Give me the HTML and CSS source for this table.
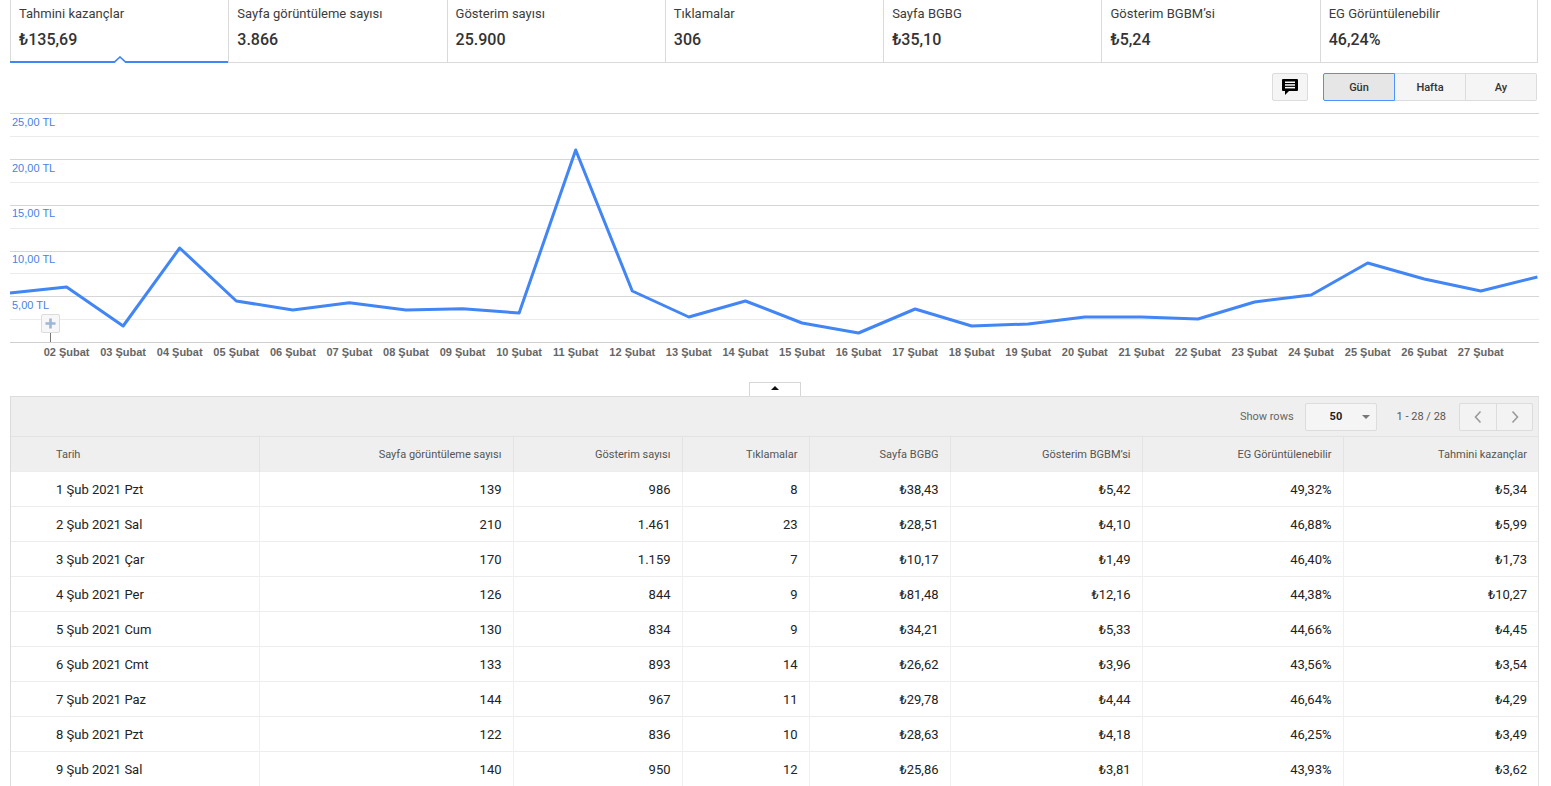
FILE: index.html
```html
<!DOCTYPE html>
<html lang="tr">
<head>
<meta charset="utf-8">
<title>Rapor</title>
<link rel="stylesheet" href="styles.css">
</head>
<body>
<div class="page">
  <div class="tabs">
    <div class="tab active">
      <div class="tab-title">Tahmini kazançlar</div>
      <div class="tab-value">₺135,69</div>
      <svg class="caret" width="14" height="7" viewBox="0 0 14 7"><polyline points="0.5,7 7,1 13.5,7" fill="#fff" stroke="#4285f4" stroke-width="1.6"/></svg>
    </div>
    <div class="tab"><div class="tab-title">Sayfa görüntüleme sayısı</div><div class="tab-value">3.866</div></div>
    <div class="tab"><div class="tab-title">Gösterim sayısı</div><div class="tab-value">25.900</div></div>
    <div class="tab"><div class="tab-title">Tıklamalar</div><div class="tab-value">306</div></div>
    <div class="tab"><div class="tab-title">Sayfa BGBG</div><div class="tab-value">₺35,10</div></div>
    <div class="tab"><div class="tab-title">Gösterim BGBM’si</div><div class="tab-value">₺5,24</div></div>
    <div class="tab"><div class="tab-title">EG Görüntülenebilir</div><div class="tab-value">46,24%</div></div>
  </div>

  <div class="toolbar">
    <button class="icon-btn" type="button">
      <svg width="16" height="16" viewBox="0 0 16 16"><rect x="0" y="0" width="16" height="12" rx="1" fill="#000"/><polygon points="3,11 3,16 8,11" fill="#000"/><rect x="3" y="2.5" width="10" height="1.5" fill="#fff"/><rect x="3" y="5.2" width="10" height="1.5" fill="#fff"/><rect x="3" y="7.9" width="10" height="1.5" fill="#fff"/></svg>
    </button>
    <div class="seg">
      <button class="seg-btn on" type="button">Gün</button>
      <button class="seg-btn" type="button">Hafta</button>
      <button class="seg-btn" type="button">Ay</button>
    </div>
  </div>

  <div class="chart">
    <svg class="chart-svg" width="1529" height="260" viewBox="0 0 1529 260">
      <g class="grid-minor" stroke="#ebebeb" stroke-width="1">
        <line x1="0" y1="31.5" x2="1529" y2="31.5"/>
        <line x1="0" y1="77.5" x2="1529" y2="77.5"/>
        <line x1="0" y1="123.5" x2="1529" y2="123.5"/>
        <line x1="0" y1="168.5" x2="1529" y2="168.5"/>
        <line x1="0" y1="214.5" x2="1529" y2="214.5"/>
      </g>
      <g class="grid-major" stroke="#d6d6d6" stroke-width="1">
        <line x1="0" y1="8.5" x2="1529" y2="8.5"/>
        <line x1="0" y1="54.5" x2="1529" y2="54.5"/>
        <line x1="0" y1="100.5" x2="1529" y2="100.5"/>
        <line x1="0" y1="146.5" x2="1529" y2="146.5"/>
        <line x1="0" y1="191.5" x2="1529" y2="191.5"/>
        <line x1="0" y1="237.5" x2="1529" y2="237.5" stroke="#cfcfcf"/>
      </g>
      <g class="ylab">
        <text x="2" y="21">25,00 TL</text>
        <text x="2" y="67">20,00 TL</text>
        <text x="2" y="112">15,00 TL</text>
        <text x="2" y="158">10,00 TL</text>
        <text x="2" y="204">5,00 TL</text>
      </g>
      <polyline fill="none" stroke="#4285f4" stroke-width="3" stroke-linejoin="round" points="0,188 56.57,182 113.14,221 169.71,143 226.28,196 282.85,205 339.42,197.7 395.99,205 452.56,203.8 509.13,208 565.7,45 622.27,186 678.84,212 735.41,196 791.98,218 848.55,228 905.12,204 961.69,221 1018.26,219 1074.83,212 1131.4,212 1187.97,214 1244.54,197 1301.11,190 1357.68,158 1414.25,174 1470.82,186 1527.39,172"/>
      <line x1="40.5" y1="226" x2="40.5" y2="237" stroke="#777" stroke-width="1"/>
      <rect x="31.5" y="209.5" width="18" height="18" rx="1.5" fill="#f7f7f7" stroke="#dcdcdc"/>
      <path d="M40.5 213.5v10M35.5 218.5h10" stroke="#9bb6d8" stroke-width="2.6"/>
      <g class="xlab">
        <text x="56.6" y="251">02 Şubat</text>
        <text x="113.1" y="251">03 Şubat</text>
        <text x="169.7" y="251">04 Şubat</text>
        <text x="226.3" y="251">05 Şubat</text>
        <text x="282.9" y="251">06 Şubat</text>
        <text x="339.4" y="251">07 Şubat</text>
        <text x="396" y="251">08 Şubat</text>
        <text x="452.6" y="251">09 Şubat</text>
        <text x="509.1" y="251">10 Şubat</text>
        <text x="565.7" y="251">11 Şubat</text>
        <text x="622.3" y="251">12 Şubat</text>
        <text x="678.8" y="251">13 Şubat</text>
        <text x="735.4" y="251">14 Şubat</text>
        <text x="792" y="251">15 Şubat</text>
        <text x="848.6" y="251">16 Şubat</text>
        <text x="905.1" y="251">17 Şubat</text>
        <text x="961.7" y="251">18 Şubat</text>
        <text x="1018.3" y="251">19 Şubat</text>
        <text x="1074.8" y="251">20 Şubat</text>
        <text x="1131.4" y="251">21 Şubat</text>
        <text x="1188" y="251">22 Şubat</text>
        <text x="1244.5" y="251">23 Şubat</text>
        <text x="1301.1" y="251">24 Şubat</text>
        <text x="1357.7" y="251">25 Şubat</text>
        <text x="1414.3" y="251">26 Şubat</text>
        <text x="1470.8" y="251">27 Şubat</text>
      </g>
    </svg>
  </div>

  <div class="collapse-row">
    <div class="collapse-tab"><span class="tri"></span></div>
  </div>

  <div class="panel">
    <div class="panel-bar">
      <span class="show-rows">Show rows</span>
      <div class="rows-select"><span class="rows-num">50</span><span class="dd"></span></div>
      <span class="range">1 - 28 / 28</span>
      <div class="pager">
        <button class="pg" type="button"><svg width="10" height="14" viewBox="0 0 10 14"><polyline points="7.5,1.5 2.5,7 7.5,12.5" fill="none" stroke="#9a9a9a" stroke-width="1.6"/></svg></button>
        <button class="pg" type="button"><svg width="10" height="14" viewBox="0 0 10 14"><polyline points="2.5,1.5 7.5,7 2.5,12.5" fill="none" stroke="#9a9a9a" stroke-width="1.6"/></svg></button>
      </div>
    </div>
    <table class="grid">
      <colgroup>
        <col class="w1"><col class="w2"><col class="w3"><col class="w4"><col class="w5"><col class="w6"><col class="w7"><col class="w8">
      </colgroup>
      <thead>
        <tr>
          <th class="left">Tarih</th>
          <th>Sayfa görüntüleme sayısı</th>
          <th>Gösterim sayısı</th>
          <th>Tıklamalar</th>
          <th>Sayfa BGBG</th>
          <th>Gösterim BGBM’si</th>
          <th>EG Görüntülenebilir</th>
          <th>Tahmini kazançlar</th>
        </tr>
      </thead>
      <tbody>
        <tr><td class="left">1 Şub 2021 Pzt</td><td>139</td><td>986</td><td>8</td><td>₺38,43</td><td>₺5,42</td><td>49,32%</td><td>₺5,34</td></tr>
        <tr><td class="left">2 Şub 2021 Sal</td><td>210</td><td>1.461</td><td>23</td><td>₺28,51</td><td>₺4,10</td><td>46,88%</td><td>₺5,99</td></tr>
        <tr><td class="left">3 Şub 2021 Çar</td><td>170</td><td>1.159</td><td>7</td><td>₺10,17</td><td>₺1,49</td><td>46,40%</td><td>₺1,73</td></tr>
        <tr><td class="left">4 Şub 2021 Per</td><td>126</td><td>844</td><td>9</td><td>₺81,48</td><td>₺12,16</td><td>44,38%</td><td>₺10,27</td></tr>
        <tr><td class="left">5 Şub 2021 Cum</td><td>130</td><td>834</td><td>9</td><td>₺34,21</td><td>₺5,33</td><td>44,66%</td><td>₺4,45</td></tr>
        <tr><td class="left">6 Şub 2021 Cmt</td><td>133</td><td>893</td><td>14</td><td>₺26,62</td><td>₺3,96</td><td>43,56%</td><td>₺3,54</td></tr>
        <tr><td class="left">7 Şub 2021 Paz</td><td>144</td><td>967</td><td>11</td><td>₺29,78</td><td>₺4,44</td><td>46,64%</td><td>₺4,29</td></tr>
        <tr><td class="left">8 Şub 2021 Pzt</td><td>122</td><td>836</td><td>10</td><td>₺28,63</td><td>₺4,18</td><td>46,25%</td><td>₺3,49</td></tr>
        <tr><td class="left">9 Şub 2021 Sal</td><td>140</td><td>950</td><td>12</td><td>₺25,86</td><td>₺3,81</td><td>43,93%</td><td>₺3,62</td></tr>
      </tbody>
    </table>
  </div>
</div>
</body>
</html>
```

FILE: styles.css
```css
html, body {
  margin: 0;
  padding: 0;
  background: #fff;
  overflow: hidden;
}
body {
  font-family: Roboto, "Liberation Sans", "DejaVu Sans", sans-serif;
  color: #333;
}
.page {
  margin-left: 10px;
  width: 1529px;
}

/* metric tabs */
.tabs {
  display: grid;
  grid-template-columns: repeat(7, 1fr);
  width: 1528px;
  height: 62px;
  border-bottom: 1px solid #dadada;
}
.tab {
  position: relative;
  border-left: 1px solid #dadada;
  padding: 6px 8px 0 8px;
}
.tab:last-child {
  border-right: 1px solid #dadada;
}
.tab-title {
  font-size: 13px;
  line-height: 16px;
  color: #3c3c3c;
  white-space: nowrap;
}
.tab-value {
  margin-top: 8px;
  font-size: 16px;
  line-height: 20px;
  font-weight: 500;
  color: #333;
}
.tab.active::after {
  content: "";
  position: absolute;
  left: -1px;
  right: 0;
  bottom: -1px;
  height: 2px;
  background: #4285f4;
}
.caret {
  position: absolute;
  left: 50%;
  bottom: -1px;
  margin-left: -7px;
  z-index: 2;
  display: block;
}

/* toolbar */
.toolbar {
  display: flex;
  justify-content: flex-end;
  align-items: center;
  gap: 15px;
  margin-top: 10px;
  padding-right: 2px;
  height: 28px;
}
.icon-btn {
  width: 36px;
  height: 28px;
  border: 1px solid #dcdcdc;
  border-radius: 2px;
  background: #f5f5f5;
  display: flex;
  align-items: center;
  justify-content: center;
  padding: 0;
  margin: 0;
}
.seg {
  display: flex;
  height: 28px;
}
.seg-btn {
  height: 28px;
  margin: 0;
  padding: 1px 0 0 0;
  border: 1px solid #dcdcdc;
  border-left: none;
  background: #f5f5f5;
  font-family: Roboto, "Liberation Sans", sans-serif;
  font-size: 11px;
  font-weight: 500;
  color: #333;
  width: 71px;
}
.seg-btn.on {
  width: 72px;
  border: 1px solid #4d90fe;
  background: #e6e6e6;
  border-radius: 2px 0 0 2px;
}
.seg-btn:last-child {
  border-radius: 0 2px 2px 0;
}

/* chart */
.chart {
  margin-top: 4px;
  height: 260px;
}
.chart-svg {
  display: block;
  overflow: visible;
}
.ylab text {
  font-family: "Liberation Sans", Arial, sans-serif;
  font-size: 11px;
  fill: #4a7fe6;
}
.xlab text {
  font-family: "Liberation Sans", Arial, sans-serif;
  font-size: 11px;
  font-weight: bold;
  fill: #666;
  text-anchor: middle;
}

/* collapse handle */
.collapse-row {
  display: flex;
  justify-content: center;
  margin-top: 17px;
}
.collapse-tab {
  width: 50px;
  border: 1px solid #d6d6d6;
  border-bottom: none;
  background: #fff;
  display: flex;
  justify-content: center;
  padding-top: 3px;
  box-sizing: content-box;
  height: 10px;
}
.tri {
  width: 0;
  height: 0;
  border-left: 4px solid transparent;
  border-right: 4px solid transparent;
  border-bottom: 4px solid #111;
}

/* table panel */
.panel {
  border-top: 1px solid #dcdcdc;
  border-left: 1px solid #dcdcdc;
  border-right: 1px solid #e4e4e4;
  width: 1527px;
  background: #efefef;
}
.panel-bar {
  height: 39px;
  display: flex;
  align-items: center;
  justify-content: flex-end;
  padding-right: 5px;
  font-size: 11px;
  color: #666;
}
.show-rows {
  margin-right: 11px;
}
.rows-select {
  width: 70px;
  height: 26px;
  border: 1px solid #dcdcdc;
  border-radius: 2px;
  background: #f5f5f5;
  display: flex;
  align-items: center;
  position: relative;
  margin-right: 20px;
}
.rows-num {
  font-weight: bold;
  color: #222;
  margin-left: 24px;
}
.dd {
  position: absolute;
  right: 6px;
  top: 11px;
  width: 0;
  height: 0;
  border-left: 4px solid transparent;
  border-right: 4px solid transparent;
  border-top: 4px solid #777;
}
.range {
  color: #555;
  margin-right: 13px;
}
.pager {
  display: flex;
  height: 28px;
  border: 1px solid #dcdcdc;
  border-radius: 2px;
  background: #f3f3f3;
  box-sizing: border-box;
}
.pg {
  width: 36px;
  height: 26px;
  border: none;
  background: transparent;
  padding: 0;
  margin: 0;
  display: flex;
  align-items: center;
  justify-content: center;
}
.pg + .pg {
  border-left: 1px solid #dcdcdc;
}

.grid {
  width: 1527px;
  border-collapse: collapse;
  table-layout: fixed;
}
.w1 { width: 248px; }
.w2 { width: 254px; }
.w3 { width: 169px; }
.w4 { width: 127px; }
.w5 { width: 141px; }
.w6 { width: 192px; }
.w7 { width: 201px; }
.w8 { width: 195px; }

.grid th {
  height: 35px;
  padding: 0 11px 0 0;
  font-size: 11px;
  font-weight: normal;
  color: #555;
  text-align: right;
  background: #efefef;
  border-top: 1px solid #e3e3e3;
  border-right: 1px solid #e3e3e3;
  white-space: nowrap;
  box-sizing: border-box;
}
.grid td {
  height: 35px;
  padding: 0 11px 0 0;
  font-size: 13px;
  color: #222;
  text-align: right;
  background: #fff;
  border-top: 1px solid #ededed;
  border-right: 1px solid #f0f0f0;
  white-space: nowrap;
  box-sizing: border-box;
}
.grid th:last-child,
.grid td:last-child {
  border-right: none;
}
.grid .left {
  text-align: left;
  padding-left: 45px;
}
```
